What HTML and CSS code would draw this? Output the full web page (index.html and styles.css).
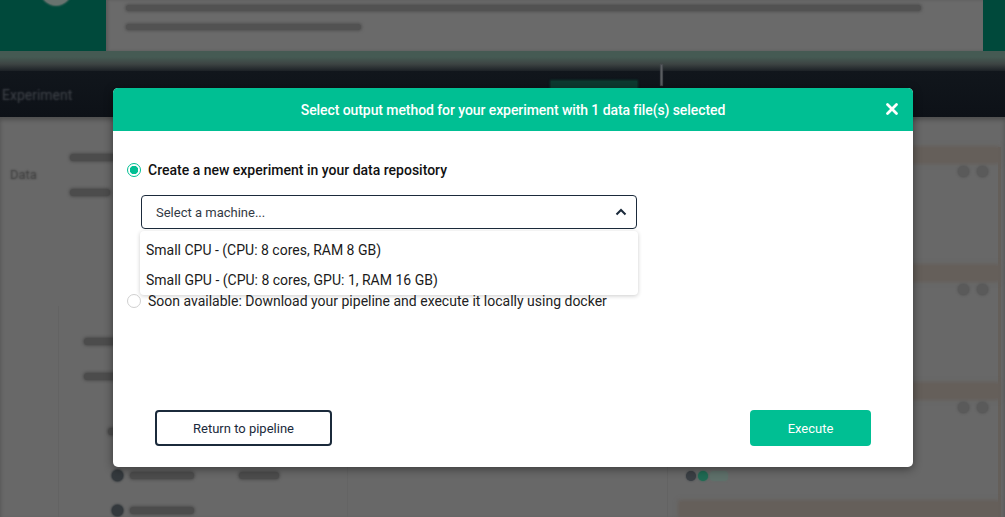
FILE: index.html
```html
<!DOCTYPE html>
<html>
<head>
<meta charset="utf-8">
<link rel="stylesheet" href="styles.css">
</head>
<body>
<div class="page">
  <div class="topbar">
    <div class="brand"><div class="brand-logo"></div></div>
    <div class="notice">
      <div class="blur-line w1"></div>
      <div class="blur-line w2"></div>
    </div>
    <div class="brand-edge"></div>
  </div>
  <div class="strip"></div>
  <div class="nav">
    <div class="nav-title">Experiment</div>
    <div class="nav-tab"></div>
    <div class="nav-divider"></div>
  </div>
  <div class="main">
    <div class="left">
      <div class="side-label">Data</div>
      <div class="left-content">
        <div class="blur-text t1"></div>
        <div class="blur-text t2"></div>
        <div class="card">
          <div class="blur-text t3"></div>
          <div class="blur-text t4"></div>
          <div class="blur-text t5"></div>
          <div class="card-row"><span class="dot"></span><span class="blur-text t6"></span><span class="blur-text t7"></span></div>
          <div class="card-row"><span class="dot"></span><span class="blur-text t6"></span></div>
        </div>
      </div>
    </div>
    <div class="right">
      <div class="rcard"><div class="rhead"></div><div class="rbody"><span class="rdot"></span><span class="rdot"></span></div></div>
      <div class="rcard"><div class="rhead"></div><div class="rbody"><span class="rdot"></span><span class="rdot"></span></div></div>
      <div class="rcard"><div class="rhead"></div><div class="rbody"><span class="rdot"></span><span class="rdot"></span></div>
        <div class="rfoot"><span class="gdot dark"></span><span class="gdot"></span><span class="gdot pale"></span></div>
      </div>
      <div class="rcard"><div class="rhead"></div></div>
    </div>
  </div>
</div>

<div class="modal">
  <div class="modal-header">
    <div class="modal-title">Select output method for your experiment with 1 data file(s) selected</div>
    <button class="close" aria-label="close">
      <svg width="14" height="14" viewBox="0 0 14 14"><path d="M2.5 2.5 L11.5 11.5 M11.5 2.5 L2.5 11.5" stroke="#fff" stroke-width="2.8" stroke-linecap="round"/></svg>
    </button>
  </div>
  <div class="modal-body">
    <label class="option selected">
      <span class="radio on"></span>
      <span class="option-label strong">Create a new experiment in your data repository</span>
    </label>
    <div class="select-wrap">
      <div class="select">
        <span class="placeholder">Select a machine...</span>
        <svg class="chev" width="12" height="8" viewBox="0 0 12 8"><path d="M1.5 6.5 L6 2 L10.5 6.5" fill="none" stroke="#1b2a3b" stroke-width="2"/></svg>
      </div>
      <div class="menu">
        <div class="menu-item">Small CPU - (CPU: 8 cores, RAM 8 GB)</div>
        <div class="menu-item">Small GPU - (CPU: 8 cores, GPU: 1, RAM 16 GB)</div>
      </div>
    </div>
    <label class="option second">
      <span class="radio"></span>
      <span class="option-label">Soon available: Download your pipeline and execute it locally using docker</span>
    </label>
  </div>
  <div class="modal-footer">
    <button class="btn outline">Return to pipeline</button>
    <button class="btn primary">Execute</button>
  </div>
</div>
</body>
</html>
```

FILE: styles.css
```css
* { box-sizing: border-box; }
html, body { margin: 0; padding: 0; }
body {
  width: 1005px;
  height: 517px;
  overflow: hidden;
  background: #686868;
  font-family: Roboto, "Liberation Sans", sans-serif;
  position: relative;
}

/* ---------- dimmed background page ---------- */
.page {
  height: 517px;
  display: flex;
  flex-direction: column;
  overflow: hidden;
}
.topbar {
  display: flex;
  height: 51px;
  flex: none;
}
.brand {
  width: 106px;
  background: #00493b;
  overflow: hidden;
}
.brand-logo {
  width: 30px; height: 30px;
  border-radius: 50%;
  background: #68736f;
  margin: -25px 0 0 41px;
  box-shadow: 0 0 2px 1px #68736f;
}
.notice {
  flex: 1;
  background: #6a6a6a;
  padding: 4px 20px 0 20px;
  display: flex;
  flex-direction: column;
  gap: 12px;
  box-shadow: inset 2px 0 3px rgba(0,0,0,.15);
}
.blur-line { height: 6px; margin-top: 1px; background: #525252; border-radius: 4px; box-shadow: 0 0 3px 1px #525252; }
.blur-line.w1 { width: 795px; }
.blur-line.w2 { width: 235px; }
.brand-edge { width: 22px; background: #00493b; }
.strip {
  height: 20px;
  flex: none;
  background: linear-gradient(#455a53 0, #455a53 30%, #3d4443 65%, #1c2126 100%);
}
.nav {
  height: 46px;
  flex: none;
  background: linear-gradient(#11161c 0, #0d1117 100%);
  display: flex;
  align-items: flex-start;
}
.nav-title {
  color: transparent;
  text-shadow: 0 0 2px #40444a;
  font-size: 14px;
  line-height: 16px;
  padding: 16px 0 0 2px;
  width: 551px;
}
.nav-tab {
  width: 86px; height: 10px;
  margin-top: 10px;
  background: #0d3a30;
  box-shadow: 0 0 2px 1px #0d3a30;
}
.nav-divider {
  width: 1px; height: 20px;
  background: #5a5d61;
  margin: -6px 0 0 24px;
  box-shadow: 0 0 1px 1px #4a4d51;
}
.main {
  flex: 1;
  min-height: 0;
  display: flex;
  background: #686868;
  box-shadow: inset 0 3px 4px rgba(0,0,0,.25);
}
.left {
  width: 668px;
  display: flex;
  border-right: 1px solid #636363;
}
.side-label {
  width: 58px;
  flex: none;
  padding: 50px 0 0 10px;
  font-size: 13px;
  line-height: 15px;
  color: transparent;
  text-shadow: 0 0 2px #3a3a3a;
}
.left-content {
  flex: 1;
  padding: 36px 0 0 12px;
  display: flex;
  flex-direction: column;
}
.blur-text {
  display: block; flex: none;
  height: 7px; margin-top: 1px;
  background: #4c4c4c; border-radius: 4px;
  box-shadow: 0 0 3px 1px #4c4c4c;
}
.t1 { width: 45px; }
.t2 { width: 40px; margin-top: 28px; }
.card {
  margin-top: 110px;
  margin-left: -12px;
  width: 290px;
  flex: 1;
  border-left: 1px solid #636363;
  border-right: 1px solid #646464;
  padding: 31px 0 0 25px;
  display: flex;
  flex-direction: column;
}
.t3 { width: 50px; }
.t4 { width: 40px; margin-top: 28px; }
.t5 { width: 14px; margin: 48px 0 0 24px; }
.card-row { display: flex; align-items: center; gap: 7px; margin: 35px 0 0 28px; }
.card-row + .card-row { margin-top: 24px; }
.dot { width: 11px; height: 11px; border-radius: 50%; background: #34393d; box-shadow: 0 0 2px 1px #34393d; }
.t6 { width: 64px; margin-top: 0; }
.t7 { width: 40px; margin-left: 38px; margin-top: 0; }
.right {
  flex: 1;
  padding: 30px 4px 0 12px;
  display: flex;
  flex-direction: column;
}
.rcard {
  height: 118px;
  flex: none;
  border-right: 3px solid #645f5a;
  display: flex;
  flex-direction: column;
}
.rhead { height: 14px; margin-top: 1px; background: #655f5a; box-shadow: 0 0 4px 2px #655f5a; }
.rbody { display: flex; justify-content: flex-end; gap: 8px; padding: 4px 10px 0 0; }
.rdot { width: 11px; height: 11px; border-radius: 50%; background: #5a5a5a; box-shadow: 0 0 2px 1px #5a5a5a; }
.rfoot { display: flex; gap: 2px; padding: 58px 0 0 6px; }
.gdot { width: 10px; height: 10px; border-radius: 50%; background: #1f6a53; box-shadow: 0 0 2px #1f6a53; }
.gdot.dark { background: #3a3f44; box-shadow: 0 0 2px #3a3f44; }
.gdot.pale { width: 18px; border-radius: 4px; background: #5e706a; box-shadow: 0 0 2px #5e706a; }

/* ---------- modal ---------- */
.modal {
  position: absolute;
  left: 113px;
  top: 88px;
  width: 800px;
  height: 379px;
  background: #fff;
  border-radius: 5px;
  box-shadow: 0 2px 10px rgba(0,0,0,.45);
  display: flex;
  flex-direction: column;
  overflow: hidden;
}
.modal-header {
  height: 43px;
  background: #00bf93;
  display: flex;
  align-items: center;
  justify-content: center;
  position: relative;
}
.modal-title {
  color: #fff;
  font-size: 14px;
  font-weight: 500;
  letter-spacing: -0.08px;
}
.close {
  position: absolute;
  right: 14px;
  top: 14px;
  width: 14px; height: 14px;
  padding: 0; border: 0; background: none;
  display: flex;
}
.modal-body {
  flex: 1;
  padding: 31px 0 0 14px;
  display: flex;
  flex-direction: column;
}
.option {
  display: flex;
  align-items: center;
  gap: 7px;
  font-size: 14px;
  color: #1a1a1a;
  height: 16px;
}
.option-label.strong { font-weight: 500; color: #111; }
.option.second { margin-top: 64px; color: #222; }
.radio {
  width: 14px; height: 14px;
  border-radius: 50%;
  border: 1px solid #d0d0d0;
  background: #fff;
  flex: none;
}
.radio.on {
  border: 1px solid #00bf93;
  background: radial-gradient(circle, #00bf93 0 4px, #fff 4.5px);
}
.select-wrap {
  margin: 17px 0 0 13px;
  width: 498px;
  position: relative;
}
.select {
  height: 34px;
  border: 1px solid #1b2a3b;
  border-radius: 4px;
  display: flex;
  align-items: center;
  justify-content: space-between;
  padding: 0 9px 0 14px;
  margin: 0 1px;
}
.placeholder { font-size: 13px; color: #333a44; }
.chev { display: block; }
.menu {
  position: absolute;
  left: 0;
  right: 0;
  top: 36px;
  z-index: 2;
  background: #fff;
  border-radius: 4px;
  box-shadow: 0 1px 4px rgba(0,0,0,.2);
  padding: 10px 0 6px 6px;
  display: flex;
  flex-direction: column;
  gap: 12px;
}
.menu-item { font-size: 14px; color: #1a1a1a; line-height: 18px; }
.modal-footer {
  display: flex;
  justify-content: space-between;
  padding: 0 42px 21px 42px;
}
.btn {
  height: 36px;
  font-family: Roboto, "Liberation Sans", sans-serif;
  font-size: 13px;
  border-radius: 4px;
  cursor: pointer;
}
.btn.outline {
  width: 177px;
  background: #fff;
  border: 2px solid #1b2a3b;
  color: #1b2a3b;
}
.btn.primary {
  width: 121px;
  border: 0;
  background: #00bf93;
  color: #fff;
}
```
